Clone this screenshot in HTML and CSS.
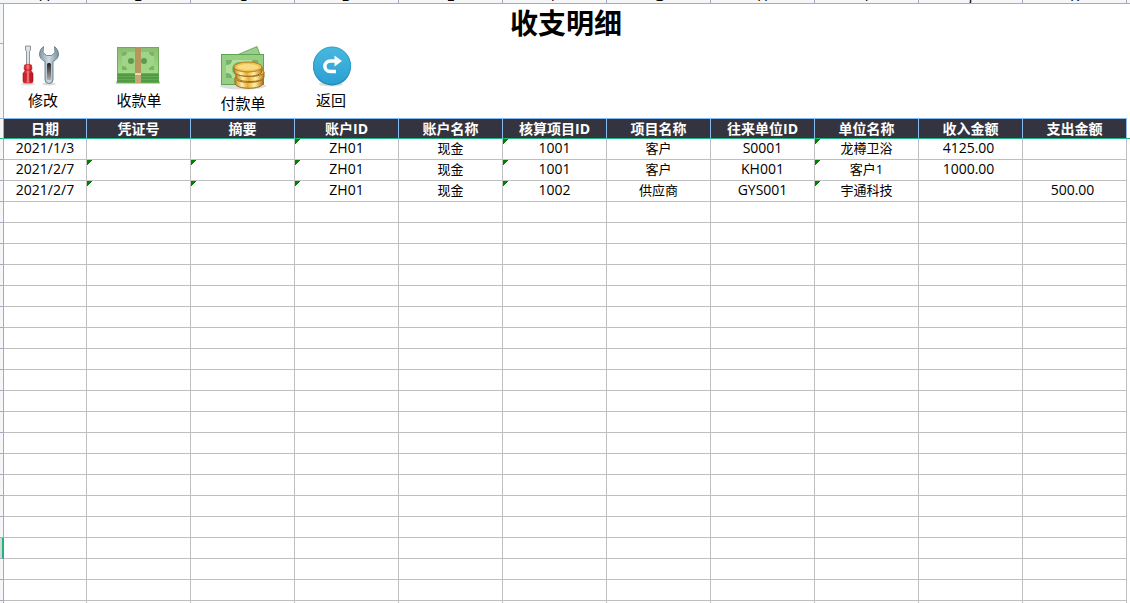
FILE: index.html
```html
<!DOCTYPE html>
<html lang="zh-CN">
<head>
  <meta charset="UTF-8" />
  <meta name="viewport" content="width=device-width, initial-scale=1.0"/>
  <title>收支明细</title>
  <link rel="stylesheet" href="styles.css">
</head>
<body>
  <div class="columns" aria-hidden="true">
    <span>A</span><span>B</span><span>C</span><span>D</span><span>E</span><span>F</span><span>G</span><span>H</span><span>I</span><span>J</span><span>K</span>
  </div>
  <div class="workspace">
    <div class="gutter">
      <div class="row-head title-head"></div>
      <div class="row-head tools-head"></div>
      <div class="row-head frozen-head"></div>
      <div id="rowHeads"></div>
    </div>
    <main class="sheet">
      <h1>收支明细</h1>
      <div class="toolbar">
        <button class="tool">
          <svg width="44" height="42" viewBox="0 0 44 42">
            <defs>
              <linearGradient id="steel"><stop offset="0" stop-color="#8499a4"/><stop offset=".5" stop-color="#cfdce3"/><stop offset="1" stop-color="#7a8f9a"/></linearGradient>
              <linearGradient id="red"><stop offset="0" stop-color="#bd1720"/><stop offset=".3" stop-color="#e2343b"/><stop offset=".5" stop-color="#ee8585"/><stop offset=".7" stop-color="#df2430"/><stop offset="1" stop-color="#a90c18"/></linearGradient>
              <linearGradient id="slot" x2="0" y2="1"><stop offset="0" stop-color="#222"/><stop offset="1" stop-color="#aaa"/></linearGradient>
            </defs>
            <ellipse cx="7" cy="39" rx="7" ry="1.5" fill="#ddd"/><ellipse cx="28" cy="39" rx="7" ry="1.5" fill="#ddd"/>
            <path d="M4.500 1h5v4l-1 1.500V21h-3V6.500l-1-1.500z" fill="#dce3e6" stroke="#777f84" stroke-width=".8"/>
            <path d="M3.500 20q3.500-1.500 7 0l.5 4-1 1.500 2 3V36q0 2-2 2H4q-2 0-2-2v-7.500l2-3L3 24z" fill="url(#red)" stroke="#b31822" stroke-width=".6"/>
            <path d="M4 25h6M5 28v8M9 28v8" stroke="#a81018" stroke-width=".8"/>
            <path d="M22.500 1.500q-4 3-4 7.500 0 5 5.500 7.500V35q0 3.500 4 3.500t4-3.500V16.500q5.500-2.500 5.500-7.500 0-4.500-4-7.500l.5 6-3.500 3h-5l-3.500-3z" fill="url(#steel)" stroke="#657b87" stroke-width=".9"/>
            <rect x="26" y="18" width="4" height="17" rx="1.500" fill="url(#slot)"/>
          </svg>
          <span>修改</span>
        </button>
        <button class="tool wide">
          <svg width="46" height="42" viewBox="0 1 46 42">
            <defs><linearGradient id="note" x2="0" y2="1"><stop offset="0" stop-color="#8bbc72"/><stop offset="1" stop-color="#a2dc84"/></linearGradient></defs>
            <path d="M0 37h44v3H0z" fill="#c8cdc6"/>
            <rect x="1" y="4" width="42" height="35" fill="#62a950"/>
            <rect x="1.500" y="3.500" width="41" height="26" fill="url(#note)" stroke="#6cab57"/>
            <rect x="6" y="8" width="32" height="18" fill="#79b366"/>
            <path d="M11 8h22q0 4 5 4v10q-5 0-5 4H11q0-4-5-4V12q5 0 5-4z" fill="#a0d486"/>
            <circle cx="15" cy="17" r="3" fill="#5d9b4e"/><circle cx="28" cy="17" r="3" fill="#5d9b4e"/>
            <path d="M1 31h42M1 34h42M1 37h42" stroke="#458c38"/>
            <path d="M19 3h6v36h-6z" fill="#b9955d"/><path d="M19 29h6v2h-6z" fill="#eadbb9"/><path d="M19 31h6v8h-6z" fill="#c7a575"/>
          </svg>
          <span>收款单</span>
        </button>
        <button class="tool wide">
          <svg width="48" height="45" viewBox="0 0 48 45">
            <defs><linearGradient id="gold"><stop offset="0" stop-color="#c58b1d"/><stop offset=".25" stop-color="#ffeeab"/><stop offset=".45" stop-color="#e5af35"/><stop offset=".7" stop-color="#fff0a9"/><stop offset="1" stop-color="#b97c16"/></linearGradient></defs>
            <ellipse cx="24" cy="41" rx="23" ry="3.500" fill="#ddd"/>
            <path d="M18 10L38 1.500l4 11-22 3z" fill="#9ccc89" stroke="#72ad62"/>
            <rect x="2.500" y="9.500" width="42" height="30" fill="#96cf84" stroke="#60a553"/>
            <path d="M7 15h32v18H7z" fill="#76b267"/><path d="M13 15h20q0 5 6 5v8q-6 0-6 5H13q0-5-6-5v-8q6 0 6-5z" fill="#b0df9c"/><circle cx="20" cy="24" r="7" fill="#7eba6d"/>
            <path d="M16 33v5c0 7 28 7 28 0v-5z" fill="url(#gold)" stroke="#9b6817"/>
            <ellipse cx="30" cy="33" rx="14" ry="4.500" fill="#f5d264" stroke="#a87519"/>
            <path d="M17 27v5c0 6 28 6 28 0v-5z" fill="url(#gold)" stroke="#9b6817"/>
            <ellipse cx="31" cy="27" rx="14" ry="4.500" fill="#f5d264" stroke="#a87519"/>
            <path d="M15 22v4c0 7 28 7 28 0v-4z" fill="url(#gold)" stroke="#9b6817"/>
            <ellipse cx="29" cy="22" rx="14" ry="5" fill="#efc352" stroke="#b47d20"/><ellipse cx="29" cy="22" rx="11" ry="3" fill="#f8dc83"/>
          </svg>
          <span>付款单</span>
        </button>
        <button class="tool round">
          <svg width="40" height="42" viewBox="0 0 40 42">
            <defs><linearGradient id="blue" x2="0" y2="1"><stop offset="0" stop-color="#47b8df"/><stop offset="1" stop-color="#2ba0d4"/></linearGradient></defs>
            <ellipse cx="20" cy="39" rx="12" ry="2.500" fill="#ddd"/><circle cx="21" cy="21.500" r="19" fill="#1b80b2"/><circle cx="21" cy="20.500" r="18.500" fill="url(#blue)" stroke="#2f9fc9"/>
            <path d="M25 26.500h-5.500c-7.500 0-7.500-10.500 0-10.500h5" fill="none" stroke="#fff" stroke-width="3.500"/><path d="M23.500 10.500L31 16l-7.500 5.500z" fill="#fff"/>
          </svg>
          <span>返回</span>
        </button>
      </div>
      <table>
        <thead>
          <tr><th>日期</th><th>凭证号</th><th>摘要</th><th>账户ID</th><th>账户名称</th><th>核算项目ID</th><th>项目名称</th><th>往来单位ID</th><th>单位名称</th><th>收入金额</th><th>支出金额</th><td class="edge"></td></tr>
        </thead>
        <tbody id="entries">
          <tr><td class="num">2021/1/3</td><td></td><td></td><td class="num flag">ZH01</td><td>现金</td><td class="num flag">1001</td><td>客户</td><td class="num">S0001</td><td class="flag">龙樽卫浴</td><td class="num money">4125.00</td><td></td></tr>
          <tr><td class="num">2021/2/7</td><td class="flag"></td><td class="flag"></td><td class="num flag">ZH01</td><td>现金</td><td class="num flag">1001</td><td>客户</td><td class="num">KH001</td><td class="flag">客户1</td><td class="num money">1000.00</td><td></td></tr>
          <tr><td class="num">2021/2/7</td><td class="flag"></td><td class="flag"></td><td class="num flag">ZH01</td><td>现金</td><td class="num flag">1002</td><td>供应商</td><td class="num">GYS001</td><td class="flag">宇通科技</td><td></td><td class="num money">500.00</td></tr>
        </tbody>
      </table>
    </main>
  </div>
  <script src="script.js"></script>
</body>
</html>
```
FILE: styles.css
```css
* {
  box-sizing: border-box;
}

body {
  margin: 0;
  height: 100vh;
  overflow: hidden;
  background: #fff;
  color: #000;
  font-family: "Open Sans", "Noto Sans CJK SC", sans-serif;
  font-size: 13px;
}

.columns {
  display: flex;
  height: 4px;
  padding: 0 3px;
  overflow: hidden;
  background: #f5f6f8;
  border-bottom: 1px solid #a6a9c2;
}

.columns span {
  display: flex;
  flex: 104 1 0;
  align-items: flex-end;
  justify-content: center;
  border-right: 1px solid #a6a9c2;
  font-size: 15px;
  line-height: 15px;
}

.columns span:first-child {
  flex-grow: 84;
}

.workspace {
  display: flex;
}

.gutter {
  width: 4px;
  flex-shrink: 0;
  background: #f5f6f8;
  border-right: 1px solid #a6a9c2;
}

.row-head {
  height: 21px;
  border-bottom: 1px solid #a6a9c2;
}

.title-head {
  height: 40px;
}

.tools-head {
  height: 75px;
}

.frozen-head {
  height: 20px;
  border-color: #21b57b;
}

.row-head.active {
  margin-right: -1px;
  background: #d5d8db;
  border-right: 2px solid #21b57b;
}

.sheet {
  flex: 1;
  min-width: 0;
}

h1 {
  height: 40px;
  margin: 0;
  padding-right: 2px;
  font-size: 28px;
  line-height: 38px;
  text-align: center;
}

.toolbar {
  display: flex;
  align-items: flex-start;
  height: 74px;
  padding: 1px 11px 0;
  gap: 32px;
}

.tool {
  display: flex;
  flex-direction: column;
  align-items: center;
  width: 56px;
  padding: 0;
  border: 0;
  background: none;
  color: #000;
  font-family: inherit;
  font-size: 15px;
  line-height: 20px;
  white-space: nowrap;
  cursor: pointer;
}

.tool.wide {
  width: 72px;
}

.tool.round {
  width: 40px;
}

.tool span {
  margin-top: 3px;
}

table {
  width: 100%;
  border-collapse: separate;
  border-spacing: 0;
  table-layout: fixed;
}

th,
td {
  height: 21px;
  padding: 0 0 2px;
  border-right: 1px solid #bfbfbf;
  border-bottom: 1px solid #bfbfbf;
  line-height: 18px;
  text-align: center;
}

th {
  padding: 0;
  background: #333440;
  border-top: 1px solid #86b9ee;
  border-right-color: #86b9ee;
  border-bottom-color: #21b57b;
  color: #fff;
  font-size: 14px;
}

th:first-child {
  width: 83px;
}

.edge {
  width: 3px;
  border-right: 0;
  border-bottom-color: #21b57b;
}

td.num {
  font-size: 14px;
}

td.flag {
  background: linear-gradient(135deg, #008000 4px, transparent 4px) no-repeat;
}

td.money {
  padding-right: 4px;
}
```
FILE: script.js
```javascript
const entries = document.getElementById('entries');
const rowHeads = document.getElementById('rowHeads');
const totalRows = 23;
const activeRow = 19;

while (entries.rows.length < totalRows) {
  const row = entries.insertRow();
  for (let i = 0; i < 11; i++) {
    row.insertCell();
  }
}

for (let i = 0; i < totalRows; i++) {
  const head = document.createElement('div');
  head.className = i === activeRow ? 'row-head active' : 'row-head';
  rowHeads.appendChild(head);
}
```
